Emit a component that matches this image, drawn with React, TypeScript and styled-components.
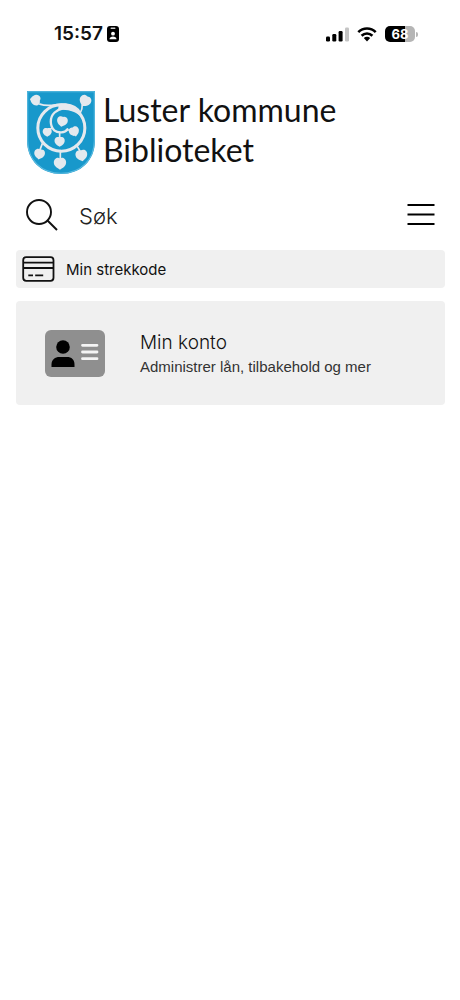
import React from 'react';
import styled, { createGlobalStyle } from 'styled-components';

const GlobalStyle = createGlobalStyle`
  *, *::before, *::after { box-sizing: border-box; }
  body { margin: 0; background: #fff; color: #111; font-family: Inter, "Liberation Sans", sans-serif; }
  button, input { font: inherit; color: inherit; border: 0; padding: 0; margin: 0; background: none; }
  svg { display: block; flex: none; }
`;

const Page = styled.div`
  display: flex;
  flex-direction: column;
`;

const StatusBar = styled.header`
  display: flex;
  justify-content: space-between;
  align-items: center;
  height: 68px;
  padding: 0 42px 0 54px;
`;

const StatusGroup = styled.div<{ $gap: number }>`
  display: flex;
  align-items: center;
  gap: ${(p) => p.$gap}px;
`;

const Clock = styled.time`
  font-size: 19px;
  line-height: 24px;
  font-weight: 600;
`;

const Battery = styled.div`
  display: flex;
  align-items: center;
  gap: 1px;
`;

const BatteryBody = styled.div`
  width: 30px;
  height: 16px;
  border-radius: 5px;
  background: linear-gradient(to right, #000 68%, #b5b5b5 68%);
  color: #fff;
  font-size: 13px;
  line-height: 16px;
  font-weight: 700;
  text-align: center;
`;

const BatteryTip = styled.div`
  width: 2px;
  height: 5px;
  border-radius: 0 2px 2px 0;
  background: #b5b5b5;
`;

const Main = styled.main`
  display: flex;
  flex-direction: column;
  padding: 22px 15px 0 16px;
`;

const Brand = styled.div`
  display: flex;
  align-items: center;
  gap: 8px;
  padding: 0 11px;
`;

const BrandName = styled.h1`
  margin: 0;
  padding-bottom: 5px;
  font-family: Lato, sans-serif;
  font-size: 32px;
  line-height: 40px;
  font-weight: 400;
`;

const BrandLine = styled.span`
  display: block;
  white-space: nowrap;
`;

const SearchRow = styled.form`
  display: flex;
  align-items: center;
  height: 50px;
  margin-top: 15px;
  padding: 0 10px;
`;

const SearchLabel = styled.label`
  display: flex;
  flex: 1;
  min-width: 0;
  align-items: center;
  gap: 21px;
`;

const SearchInput = styled.input`
  flex: 1;
  width: 100%;
  min-width: 0;
  height: 32px;
  padding-top: 2px;
  font-size: 22px;
  font-weight: 300;
  outline: none;
  &::placeholder { color: #222; opacity: 1; }
`;

const IconButton = styled.button`
  display: flex;
  cursor: pointer;
`;

const BarcodeButton = styled.button`
  display: flex;
  align-items: center;
  gap: 11px;
  height: 38px;
  margin-top: 10px;
  padding: 0 6px;
  border-radius: 4px;
  background: #f0f0f0;
  font-size: 15px;
  text-align: left;
  cursor: pointer;
`;

const AccountCard = styled.a`
  display: flex;
  align-items: center;
  gap: 35px;
  min-height: 104px;
  margin-top: 13px;
  padding: 0 29px;
  border-radius: 4px;
  background: #f0f0f0;
  color: inherit;
  text-decoration: none;
`;

const CardBody = styled.div`
  padding-top: 4px;
`;

const CardTitle = styled.div`
  font-size: 19px;
  line-height: 24px;
  font-weight: 300;
`;

const CardText = styled.div`
  font-family: "Liberation Sans", sans-serif;
  font-size: 15px;
  line-height: 24px;
  color: #333;
`;

const leaf = 'M0 17C-3 14 -8 13 -12 8C-18 1 -17 -9 -10 -13C-6 -15 -3 -14 0 -13C3 -14 6 -15 10 -13C17 -9 18 1 12 8C8 13 3 14 0 17Z';

const leaves = [
  [63, 62, 1, 100], [211, 64, 1.1, 30], [143, 125, 1, 10], [98, 157, 0.85, 0],
  [178, 155, 0.95, -20], [135, 185, 0.95, 0], [75, 222, 1, 10], [136, 250, 1.15, 0], [200, 226, 1.1, -10],
];

const Crest = () => (
  <svg width="68" height="83" viewBox="38 35 202 247" role="img" aria-label="Luster kommune">
    <path d="M38 35H240V183C240 241 198 282 139 282C80 282 38 241 38 183Z" fill="#1898cb" />
    <path d="M40 37H238V183C238 240 197 280 139 280C81 280 40 240 40 183Z" fill="none" stroke="#5cbbe0" strokeWidth="3" />
    <g fill="none" stroke="#e4e9ee" strokeLinecap="round">
      <ellipse cx="140" cy="145" rx="70" ry="69" strokeWidth="9" />
      <path d="M76 74C104 84 123 73 153 74C177 76 190 87 196 99" strokeWidth="5" />
      <path d="M176 92C156 80 133 87 120 99C104 114 106 139 119 152C130 161 151 160 158 149" strokeWidth="7" />
      <path d="M202 78C203 88 200 94 196 101M84 190L76 211M137 212V236M187 199L197 216M112 146L100 151M135 158V178M156 151L169 151" strokeWidth="5" />
    </g>
    <path d="M132 78C164 68 190 82 204 116C184 96 158 88 130 92Z" fill="#e4e9ee" />
    <g fill="#e4e9ee">
      {leaves.map(([x, y, scale, turn]) => (
        <path key={`${x}-${y}`} d={leaf} transform={`translate(${x} ${y}) rotate(${turn}) scale(${scale})`} />
      ))}
    </g>
  </svg>
);

const BadgeIcon = () => (
  <svg width="12" height="16" viewBox="0 0 12 16" aria-hidden="true">
    <rect width="12" height="16" rx="3" />
    <rect x="3.5" y="1.5" width="5" height="1.4" rx=".7" fill="#ccc" />
    <circle cx="6" cy="7.7" r="1.9" fill="#fff" />
    <path d="M2.5 13.3C2.5 9.7 9.5 9.7 9.5 13.3Z" fill="#fff" />
  </svg>
);

const SignalIcon = () => (
  <svg width="23" height="15" viewBox="0 0 23 15" aria-label="Signal" role="img">
    <rect y="9.5" width="4" height="5" rx="1.2" />
    <rect x="6.3" y="7" width="4" height="7.5" rx="1.2" />
    <rect x="12.6" y="4" width="4" height="10.5" rx="1.2" />
    <rect x="19" y=".5" width="4" height="14" rx="1.2" fill="#c4c4c4" />
  </svg>
);

const WifiIcon = () => (
  <svg width="20" height="15" viewBox="0 0 20 15" aria-label="Wi-Fi" role="img">
    <path d="M1.3 5.2C6.2.3 13.8.3 18.7 5.2M4.6 8.7C7.7 5.7 12.3 5.7 15.4 8.7" fill="none" stroke="#000" strokeWidth="2.6" />
    <path d="M6.8 11C8.6 9.3 11.4 9.3 13.2 11L10 14.4Z" />
  </svg>
);

const SearchIcon = () => (
  <svg width="32" height="32" viewBox="0 0 32 32" fill="none" stroke="#111" strokeWidth="1.9" aria-hidden="true">
    <circle cx="13" cy="13" r="12" />
    <path d="M21.5 21.5L31 31" />
  </svg>
);

const MenuIcon = () => (
  <svg width="28" height="22" viewBox="0 0 28 22" fill="none" stroke="#000" strokeWidth="2" aria-hidden="true">
    <path d="M.5 1H27.5M.5 10.5H27.5M.5 20H27.5" />
  </svg>
);

const CreditCardIcon = () => (
  <svg width="33" height="26" viewBox="0 0 33 26" fill="none" stroke="#111" strokeWidth="1.8" aria-hidden="true">
    <rect x="1.2" y="1.2" width="30.3" height="23.6" rx="3" />
    <path d="M1 6.7H31.5M1 12H31.5M6.3 19.3H11M13.2 19.3H21.2" />
  </svg>
);

const IdCardIcon = () => (
  <svg width="60" height="47" viewBox="0 0 60 47" aria-hidden="true">
    <rect width="60" height="47" rx="6" fill="#8f8f8f" />
    <circle cx="18" cy="17" r="6.8" />
    <path d="M6.5 37V34.5C6.5 29.5 10 27 14.5 27H22C26.5 27 29.5 29.5 29.5 34.5V37Z" />
    <path d="M37.5 15.3H52M37.5 22H52M37.5 28.7H52" stroke="#f4f4f4" strokeWidth="2.8" strokeLinecap="round" />
  </svg>
);

export default function App() {
  return (
    <>
      <GlobalStyle />
      <Page>
        <StatusBar>
          <StatusGroup $gap={4}>
            <Clock>15:57</Clock>
            <BadgeIcon />
          </StatusGroup>
          <StatusGroup $gap={8}>
            <SignalIcon />
            <WifiIcon />
            <Battery>
              <BatteryBody>68</BatteryBody>
              <BatteryTip />
            </Battery>
          </StatusGroup>
        </StatusBar>
        <Main>
          <Brand>
            <Crest />
            <BrandName>
              <BrandLine>Luster kommune</BrandLine>
              <BrandLine>Biblioteket</BrandLine>
            </BrandName>
          </Brand>
          <SearchRow role="search">
            <SearchLabel>
              <SearchIcon />
              <SearchInput type="search" placeholder="Søk" aria-label="Søk" />
            </SearchLabel>
            <IconButton type="button" aria-label="Meny">
              <MenuIcon />
            </IconButton>
          </SearchRow>
          <BarcodeButton type="button">
            <CreditCardIcon />
            Min strekkode
          </BarcodeButton>
          <AccountCard href="#konto">
            <IdCardIcon />
            <CardBody>
              <CardTitle>Min konto</CardTitle>
              <CardText>Administrer lån, tilbakehold og mer</CardText>
            </CardBody>
          </AccountCard>
        </Main>
      </Page>
    </>
  );
}
